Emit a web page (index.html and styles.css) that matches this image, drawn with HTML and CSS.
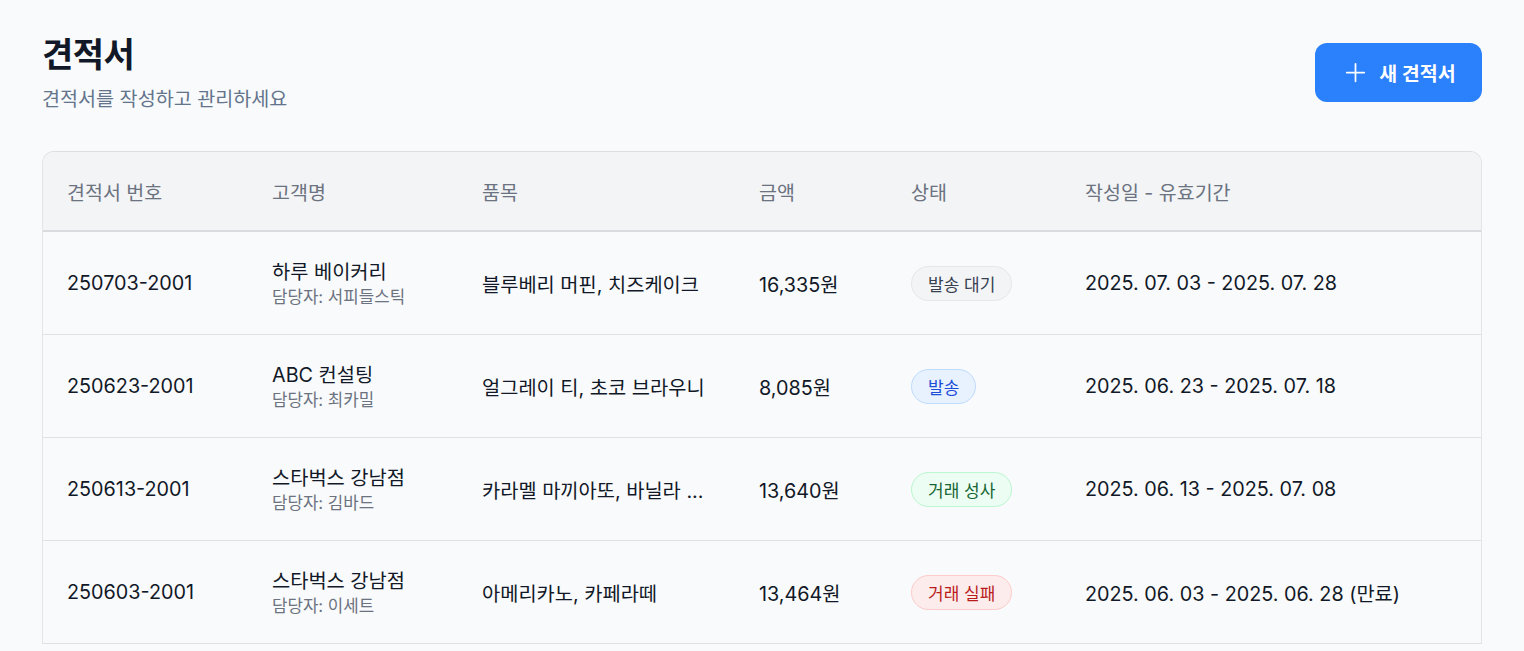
FILE: index.html
```html
<!DOCTYPE html>
<html lang="ko">
<head>
<meta charset="utf-8">
<link rel="stylesheet" href="styles.css">
</head>
<body>
<main class="page">
  <header class="page-head">
    <div class="titles">
      <h1 class="title">견적서</h1>
      <p class="subtitle">견적서를 작성하고 관리하세요</p>
    </div>
    <button class="btn-new">
      <svg class="plus" viewBox="0 0 24 24" width="24" height="24"><path d="M12 2v20M2 12h20" stroke="#fff" stroke-width="2" stroke-linecap="round" fill="none"/></svg>
      <span>새 견적서</span>
    </button>
  </header>

  <section class="card">
    <div class="row head">
      <div class="c c1">견적서 번호</div>
      <div class="c c2">고객명</div>
      <div class="c c3">품목</div>
      <div class="c c4">금액</div>
      <div class="c c5">상태</div>
      <div class="c c6">작성일 - 유효기간</div>
    </div>
    <div class="row">
      <div class="c c1">250703-2001</div>
      <div class="c c2"><div class="name">하루 베이커리</div><div class="mgr">담당자: 서피들스틱</div></div>
      <div class="c c3">블루베리 머핀, 치즈케이크</div>
      <div class="c c4">16,335원</div>
      <div class="c c5"><span class="badge gray">발송 대기</span></div>
      <div class="c c6">2025. 07. 03 - 2025. 07. 28</div>
    </div>
    <div class="row">
      <div class="c c1">250623-2001</div>
      <div class="c c2"><div class="name">ABC 컨설팅</div><div class="mgr">담당자: 최카밀</div></div>
      <div class="c c3">얼그레이 티, 초코 브라우니</div>
      <div class="c c4">8,085원</div>
      <div class="c c5"><span class="badge blue">발송</span></div>
      <div class="c c6">2025. 06. 23 - 2025. 07. 18</div>
    </div>
    <div class="row">
      <div class="c c1">250613-2001</div>
      <div class="c c2"><div class="name">스타벅스 강남점</div><div class="mgr">담당자: 김바드</div></div>
      <div class="c c3">카라멜 마끼아또, 바닐라 ...</div>
      <div class="c c4">13,640원</div>
      <div class="c c5"><span class="badge green">거래 성사</span></div>
      <div class="c c6">2025. 06. 13 - 2025. 07. 08</div>
    </div>
    <div class="row">
      <div class="c c1">250603-2001</div>
      <div class="c c2"><div class="name">스타벅스 강남점</div><div class="mgr">담당자: 이세트</div></div>
      <div class="c c3">아메리카노, 카페라떼</div>
      <div class="c c4">13,464원</div>
      <div class="c c5"><span class="badge red">거래 실패</span></div>
      <div class="c c6">2025. 06. 03 - 2025. 06. 28 (만료)</div>
    </div>
  </section>
</main>
</body>
</html>
```

FILE: styles.css
```css
* { box-sizing: border-box; }
html, body { margin: 0; padding: 0; }
body {
  background: #f8fafc;
  font-family: Inter, "Noto Sans CJK KR", "Noto Sans", sans-serif;
  color: #111827;
}
.page {
  padding: 31px 42px 40px 42px;
}
.page-head {
  display: flex;
  justify-content: space-between;
  align-items: flex-start;
}
.title {
  margin: 0;
  font-size: 34px;
  font-weight: 700;
  line-height: 48px;
  color: #111827;
  letter-spacing: -0.5px;
}
.subtitle {
  margin: 6px 0 0 0;
  font-size: 19.6px;
  line-height: 28px;
  color: #64748b;
}
.btn-new {
  margin-top: 12px;
  height: 59px;
  width: 167px;
  border: none;
  border-radius: 12px;
  background: #2b80fb;
  color: #fff;
  font-family: inherit;
  font-size: 19.5px;
  font-weight: 700;
  display: flex;
  align-items: center;
  justify-content: center;
  gap: 13px;
  padding: 0 0 0 4px;
}
.plus { width: 21px; height: 21px; }
.card {
  margin-top: 38px;
  border: 1px solid #e2e4e8;
  border-top-color: #dcdee2;
  border-radius: 12px 12px 0 0;
  border-bottom: none;
  overflow: hidden;
  background: #f9fafb;
}
.row {
  display: grid;
  grid-template-columns: 205px 210px 277px 152px 174px 1fr;
  align-items: center;
  height: 103px;
  border-bottom: 1px solid #dfe1e5;
  font-size: 19.8px;
  color: #111827;
}
.row.head {
  height: 80px;
  background: #f3f4f6;
  border-bottom: 2px solid #d9dbdf;
  color: #6b7280;
  font-size: 19.5px;
}
.c { padding-left: 24px; white-space: nowrap; }
.name { font-size: 19.8px; line-height: 28px; }
.mgr { font-size: 16.8px; line-height: 22px; color: #6b7280; }
.badge {
  display: inline-flex;
  align-items: center;
  height: 35px;
  padding: 0 16px;
  border-radius: 999px;
  font-size: 17px;
  border: 1px solid;
}
.badge.gray { background: #f3f4f6; border-color: #e5e7eb; color: #374151; }
.badge.blue { background: #e8f1fe; border-color: #bfdbfe; color: #1d4ed8; }
.badge.green { background: #ecfdf3; border-color: #bbf7d0; color: #166534; }
.badge.red { background: #fdecec; border-color: #fecaca; color: #b91c1c; }
```
